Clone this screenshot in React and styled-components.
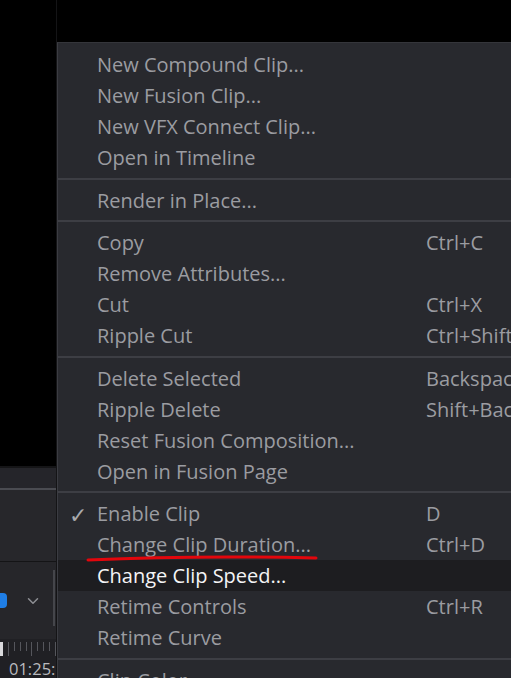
import React from 'react';
import styled, {createGlobalStyle} from 'styled-components';
import {ChevronDown} from 'lucide-react';

const GlobalStyle = createGlobalStyle`
html, body {
margin: 0;
padding: 0;
background: #000;
}
body {
font-family: "Open Sans", "Noto Sans", sans-serif;
}
`;

const Screen = styled.div`
display: flex;
width: 511px;
height: 678px;
overflow: hidden;
background: #000;
`;

const SidePanel = styled.div`
display: flex;
flex-direction: column;
width: 56px;
flex-shrink: 0;
border-right: 1px solid #141416;
`;

const Viewer = styled.div`
height: 467px;
background: #000;
border-bottom: 2px solid #151517;
`;

const ToolStrip = styled.div`
height: 21px;
background: #25252a;
border-bottom: 2px solid #4a4b51;
`;

const Inspector = styled.div`
height: 71px;
background: #27272b;
border-bottom: 1px solid #141416;
`;

const Controls = styled.div`
position: relative;
display: flex;
align-items: center;
height: 77px;
background: #26262a;
color: #8e8f94;
`;

const BlueToggle = styled.div`
width: 13px;
height: 15px;
margin-left: -6px;
border-radius: 4px;
background: #1f7ee6;
`;

const Chevron = styled.div`
display: flex;
margin-left: 17px;
`;

const ScrollThumb = styled.div`
position: absolute;
right: 1px;
top: 8px;
width: 2px;
height: 56px;
background: #45464b;
`;

const Ruler = styled.div`
display: flex;
flex-direction: column;
flex: 1;
background: #202024;
`;

const Ticks = styled.div`
display: flex;
align-items: flex-start;
gap: 5px;
height: 18px;
padding: 3px 0 0 0;
`;

const Tick = styled.div`
height: ${({tall}) => (tall ? '14px' : '9px')};
background: ${({head}) => (head ? '#d9d9dc' : '#55565c')};
width: ${({head}) => (head ? '3px' : '1px')};
`;

const Timecode = styled.div`
padding-left: 9px;
font-size: 16.5px;
line-height: 18px;
color: #b9babe;
white-space: nowrap;
`;

const Menu = styled.div`
position: relative;
flex: 1;
margin-top: 42px;
padding-top: 6px;
background: #28292e;
border-left: 1px solid #3b3c42;
border-top: 1px solid #34353a;
`;

const Row = styled.div`
display: grid;
grid-template-columns: 39px 329px auto;
align-items: center;
height: 31px;
font-size: 20px;
white-space: nowrap;
color: ${({active}) => (active ? '#f4f4f6' : '#9b9ca1')};
background: ${({active}) => (active ? '#1d1d20' : 'transparent')};
`;

const Check = styled.span`
padding-left: 11px;
font-size: 22px;
color: #a9aaae;
`;

const Shortcut = styled.span`
overflow: hidden;
`;

const Separator = styled.div`
height: 11.5px;
display: flex;
align-items: center;

&::after {
content: '';
flex: 1;
height: 2px;
background: #3d3e44;
}
`;

const Scribble = styled.svg`
position: absolute;
left: 28px;
top: 511px;
overflow: visible;
`;

const groups = [
    [
        {label: 'New Compound Clip...'},
        {label: 'New Fusion Clip...'},
        {label: 'New VFX Connect Clip...'},
        {label: 'Open in Timeline'},
    ],
    [{label: 'Render in Place...'}],
    [
        {label: 'Copy', key: 'Ctrl+C'},
        {label: 'Remove Attributes...'},
        {label: 'Cut', key: 'Ctrl+X'},
        {label: 'Ripple Cut', key: 'Ctrl+Shift+X'},
    ],
    [
        {label: 'Delete Selected', key: 'Backspace'},
        {label: 'Ripple Delete', key: 'Shift+Backspace'},
        {label: 'Reset Fusion Composition...'},
        {label: 'Open in Fusion Page'},
    ],
    [
        {label: 'Enable Clip', key: 'D', checked: true},
        {label: 'Change Clip Duration...', key: 'Ctrl+D'},
        {label: 'Change Clip Speed...', active: true},
        {label: 'Retime Controls', key: 'Ctrl+R'},
        {label: 'Retime Curve'},
    ],
    [{label: 'Clip Color'}],
];

const ticks = [true, false, false, false, true, false, false, false, true];

export default function App() {
    return (
        <>
            <GlobalStyle/>
            <Screen>
                <SidePanel>
                    <Viewer/>
                    <ToolStrip/>
                    <Inspector/>
                    <Controls>
                        <BlueToggle/>
                        <Chevron><ChevronDown size={18} strokeWidth={2}/></Chevron>
                        <ScrollThumb/>
                    </Controls>
                    <Ruler>
                        <Ticks>
                            <Tick head tall/>
                            {ticks.map((tall, i) => <Tick key={i} tall={tall}/>)}
                        </Ticks>
                        <Timecode>01:25:</Timecode>
                    </Ruler>
                </SidePanel>
                <Menu>
                    {groups.map((group, g) => (
                        <React.Fragment key={g}>
                            {g > 0 && <Separator/>}
                            {group.map(item => (
                                <Row key={item.label} active={item.active}>
                                    {item.checked ? <Check>✓</Check> : <span/>}
                                    <span>{item.label}</span>
                                    <Shortcut>{item.key}</Shortcut>
                                </Row>
                            ))}
                        </React.Fragment>
                    ))}
                    <Scribble width="232" height="8" viewBox="0 0 232 8">
                        <path d="M2 6 Q 110 1 230 4" fill="none" stroke="#e3060c" strokeWidth="3" strokeLinecap="round"/>
                    </Scribble>
                </Menu>
            </Screen>
        </>
    );
}
